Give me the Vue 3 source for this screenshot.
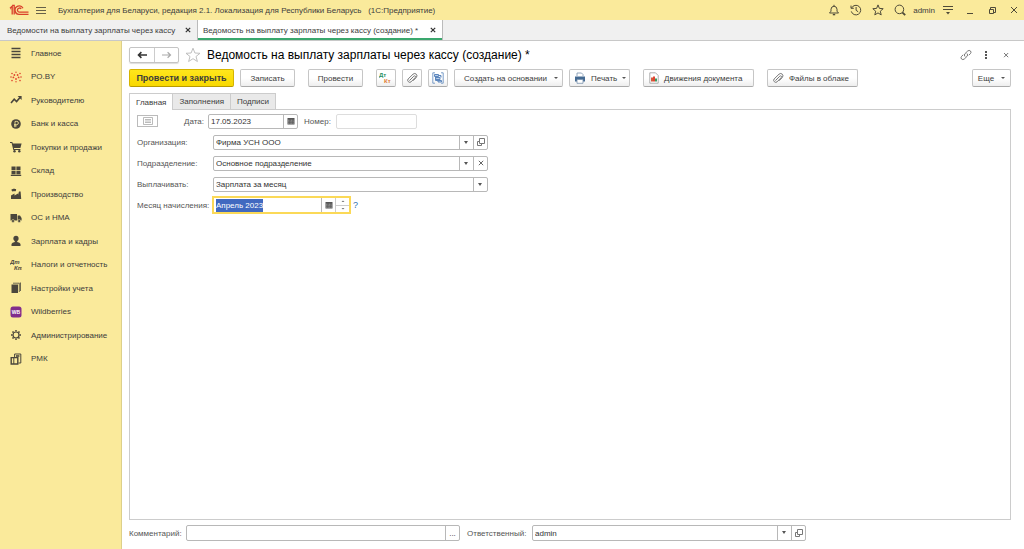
<script setup>
import { ref, onMounted } from 'vue'

const sections = [
  { id: 'main', label: 'Главное' },
  { id: 'poby', label: 'PO.BY' },
  { id: 'chart', label: 'Руководителю' },
  { id: 'bank', label: 'Банк и касса' },
  { id: 'cart', label: 'Покупки и продажи' },
  { id: 'store', label: 'Склад' },
  { id: 'factory', label: 'Производство' },
  { id: 'truck', label: 'ОС и НМА' },
  { id: 'person', label: 'Зарплата и кадры' },
  { id: 'dtkt', label: 'Налоги и отчетность' },
  { id: 'books', label: 'Настройки учета' },
  { id: 'wb', label: 'Wildberries' },
  { id: 'gear', label: 'Администрирование' },
  { id: 'rmk', label: 'РМК' },
]

const date = ref('17.05.2023')
const number = ref('')
const month = ref('Апрель 2023')
const comment = ref('')
const monthInput = ref(null)

onMounted(() => {
  monthInput.value.focus()
  monthInput.value.select()
})
</script>

<template>
  <div class="app">
    <header class="titlebar">
      <svg class="logo" viewBox="0 0 20 12" aria-label="1C" role="img">
        <g fill="none" stroke="#d9402b" stroke-width="1.3">
          <path d="M1 4.2 3.2 2.2V10.5M1.6 4.8H2.2" />
          <path d="M3.2 1.4H5.2V10.5" />
          <path d="M14 4.2A4.2 4.2 0 1 0 10.6 10.3H19.5" />
          <path d="M12.2 4.8A2.1 2.1 0 1 0 10.8 8.2H19.5" />
        </g>
      </svg>
      <button class="bare burger" aria-label="Меню">
        <svg width="11" height="9" viewBox="0 0 11 9"><path d="M0 1.5H10M0 4.5H10M0 7.5H10" stroke="#666048" /></svg>
      </button>
      <span class="app-name">Бухгалтерия для Беларуси, редакция 2.1. Локализация для Республики Беларусь &nbsp; (1С:Предприятие)</span>
      <div class="tools">
        <button class="bare" aria-label="Уведомления">
          <svg width="12" height="12" viewBox="0 0 12 12" fill="none" stroke="#4e4a38"><path d="M1.5 9H10.5L9 7.2V5.2Q8.8 2.4 6 2.2Q3.2 2.4 3 5.2V7.2ZM6 2.2V.8" /><path d="M4.8 10.6H7.2" stroke-width="1.4" /></svg>
        </button>
        <button class="bare" aria-label="История">
          <svg width="12" height="12" viewBox="0 0 12 12" fill="none" stroke="#4e4a38"><path d="M1.6 4A4.8 4.8 0 1 1 1.3 7.4M1 1.6V4.3H3.8M6.1 3V6.3L8.2 7.8" /></svg>
        </button>
        <button class="bare" aria-label="Избранное">
          <svg width="12" height="12" viewBox="0 0 12 12" fill="none" stroke="#4e4a38"><path d="M6 .9 7.4 4.4 11.2 4.7 8.3 7.2 9.2 10.9 6 8.9 2.8 10.9 3.7 7.2.8 4.7 4.6 4.4Z" /></svg>
        </button>
        <button class="bare" aria-label="Поиск">
          <svg width="12" height="12" viewBox="0 0 12 12" fill="none" stroke="#4e4a38"><circle cx="5.4" cy="5.4" r="4.3" /><path d="M8.3 8.3 11.2 11.2" stroke-width="1.8" /></svg>
        </button>
        <a class="user" href="#">admin</a>
        <button class="bare" aria-label="Сервис">
          <svg width="12" height="12" viewBox="0 0 12 12"><path d="M1 2.5H11M1 5.5H11" stroke="#4e4a38" /><path d="M4 8H8L6 10.4Z" fill="#4e4a38" /></svg>
        </button>
        <button class="bare win" aria-label="Свернуть">
          <svg width="8" height="8" viewBox="0 0 8 8"><path d="M1 7.5H7" stroke="#4e4a38" /></svg>
        </button>
        <button class="bare win" aria-label="Восстановить">
          <svg width="8" height="8" viewBox="0 0 8 8" fill="none" stroke="#4e4a38"><path d="M1.5 3.5H5.5V7.5H1.5ZM2.5 3V1.5H7.5V6.5H6" /></svg>
        </button>
        <button class="bare win" aria-label="Закрыть">
          <svg width="8" height="8" viewBox="0 0 8 8"><path d="M1 1 7 7M7 1 1 7" stroke="#4e4a38" /></svg>
        </button>
      </div>
    </header>

    <nav class="windows" aria-label="Открытые окна">
      <div class="window">
        <a href="#">Ведомости на выплату зарплаты через кассу</a>
        <button class="bare" aria-label="Закрыть вкладку"><svg width="6" height="6" viewBox="0 0 6 6"><path d="M.8.8 5.2 5.2M5.2.8.8 5.2" stroke="#333" stroke-width="1.2" /></svg></button>
      </div>
      <div class="window current">
        <a href="#">Ведомость на выплату зарплаты через кассу (создание) *</a>
        <button class="bare" aria-label="Закрыть вкладку"><svg width="6" height="6" viewBox="0 0 6 6"><path d="M.8.8 5.2 5.2M5.2.8.8 5.2" stroke="#333" stroke-width="1.2" /></svg></button>
      </div>
    </nav>

    <div class="body">
      <nav class="sidebar" aria-label="Разделы">
        <a v-for="s in sections" :key="s.id" href="#" class="section">
          <svg width="12" height="12" viewBox="0 0 12 12" aria-hidden="true">
            <path v-if="s.id === 'main'" d="M1.5 1.5H10.5M1.5 4.5H10.5M1.5 7.5H10.5M1.5 10.5H10.5" stroke="#4a463c" stroke-width="1.3" />
            <g v-else-if="s.id === 'poby'" fill="#e0452f">
              <circle cx="6" cy="1.3" r=".7" /><circle cx="2" cy="2.5" r=".8" /><circle cx="10" cy="2.5" r=".8" />
              <circle cx="4.4" cy="4" r=".9" /><circle cx="7.6" cy="4" r=".9" /><circle cx="1" cy="6" r=".8" />
              <circle cx="3.4" cy="6.4" r=".9" /><circle cx="8.6" cy="6.4" r=".9" /><circle cx="11" cy="6" r=".8" />
              <circle cx="6" cy="8" r=".9" /><circle cx="2" cy="9.6" r=".8" /><circle cx="10" cy="9.6" r=".8" /><circle cx="6" cy="10.8" r=".7" />
            </g>
            <g v-else-if="s.id === 'chart'"><path d="M1 9 4.2 5.2 6.6 7.6 10 3.6" fill="none" stroke="#4a463c" stroke-width="1.6" /><path d="M7.6 2H11.6V6Z" fill="#4a463c" /></g>
            <g v-else-if="s.id === 'bank'"><circle cx="6" cy="6" r="4.8" fill="#4a463c" /><path d="M5 9.2V3.4H6.8A1.6 1.6 0 0 1 6.8 6.6H4M4 7.9H6.8" fill="none" stroke="#faec9e" stroke-width=".8" /></g>
            <g v-else-if="s.id === 'cart'" fill="#4a463c"><path d="M0 1H2.3L2.8 2.4H11.6L10.4 7H3.9L4.2 8H10.4V9H3.3L1.6 2H0Z" /><circle cx="4.5" cy="10.3" r="1.2" /><circle cx="9.3" cy="10.3" r="1.2" /></g>
            <path v-else-if="s.id === 'store'" d="M1.5 1.5H5.6V5H1.5ZM6.4 1.5H10.5V5H6.4ZM1.5 5.8H5.6V9.2H1.5ZM6.4 5.8H10.5V9.2H6.4ZM.8 9.8H11.2V11H.8Z" fill="#4a463c" />
            <path v-else-if="s.id === 'factory'" d="M1 11V7.5L4.5 5.5V7.5L8 5.5V7L9 3.6H10.6L11.2 11ZM1.5 2.2Q1.5.6 3 1.3Q3.8 0 5 1.1Q6.6.6 6 2.4Q5.4 3.8 4 3.1Q2.4 4.2 1.5 2.2Z" fill="#4a463c" />
            <g v-else-if="s.id === 'truck'" fill="#4a463c"><path d="M.5 2H7V8.6H.5ZM7.6 3.6H10L11.6 6V8.6H7.6Z" /><circle cx="3" cy="9" r="1.5" stroke="#faec9e" stroke-width=".5" /><circle cx="9.2" cy="9" r="1.5" stroke="#faec9e" stroke-width=".5" /></g>
            <g v-else-if="s.id === 'person'" fill="#4a463c"><circle cx="6" cy="3.4" r="2.6" /><path d="M1.5 11V9Q2 7.6 4.8 7V5.5H7.2V7Q10 7.6 10.5 9V11Z" /></g>
            <g v-else-if="s.id === 'dtkt'" class="dtkt-glyph"><text x="0" y="5">Дт</text><text x="4" y="11">Кт</text></g>
            <g v-else-if="s.id === 'books'"><path d="M1.5 2.5H8V11H1.5Z" fill="#4a463c" /><path d="M3 1.2H9.3V10M9.9.8H10.5V9" fill="none" stroke="#4a463c" stroke-width=".8" /></g>
            <g v-else-if="s.id === 'wb'"><rect x=".5" y=".5" width="11" height="11" rx="2.5" fill="#812d8c" /><text x="6" y="8" class="wb-glyph">WB</text></g>
            <g v-else-if="s.id === 'gear'" fill="none" stroke="#4a463c"><circle cx="6" cy="6" r="3" stroke-width="1.2" /><path d="M6 1V2.6M6 9.4V11M1 6H2.6M9.4 6H11M2.5 2.5 3.6 3.6M8.4 8.4 9.5 9.5M9.5 2.5 8.4 3.6M3.6 8.4 2.5 9.5" stroke-width="1.5" /></g>
            <g v-else fill="none" stroke="#4a463c"><path d="M4.6 4V1H10.8V10H8.5" /><path d="M6 3H9.4" stroke-width="1.6" /><path d="M1.2 4.6H7.8V11H1.2Z" stroke-width="1.4" /><path d="M3.8 5V11" /></g>
          </svg>
          <span>{{ s.label }}</span>
        </a>
      </nav>

      <main class="document">
        <div class="heading">
          <div class="history">
            <button aria-label="Назад"><svg width="11" height="8" viewBox="0 0 11 8"><path d="M1.5 4H10M4.4 1.2 1.5 4 4.4 6.8" fill="none" stroke="#333" stroke-width="1.6" /></svg></button>
            <button aria-label="Вперед"><svg width="11" height="8" viewBox="0 0 11 8"><path d="M1 4H9.5M6.6 1.2 9.5 4 6.6 6.8" fill="none" stroke="#aaa" stroke-width="1.2" /></svg></button>
          </div>
          <button class="bare" aria-label="В избранное">
            <svg width="16" height="16" viewBox="0 0 16 16"><path d="M8 1.2 9.9 6 15 6.3 11 9.5 12.4 14.5 8 11.7 3.6 14.5 5 9.5 1 6.3 6.1 6Z" fill="none" stroke="#b8b8b8" stroke-width=".9" /></svg>
          </button>
          <h1>Ведомость на выплату зарплаты через кассу (создание) *</h1>
          <div class="heading-tools">
            <button class="bare" aria-label="Получить ссылку">
              <svg width="12" height="12" viewBox="0 0 12 12" fill="none" stroke="#777"><path d="M5 7.5Q3.7 6 5 4.6L7.7 2Q9.2.8 10.5 2Q11.6 3.3 10.4 4.7L8.8 6.2M7 4.5Q8.3 6 7 7.4L4.3 10Q2.8 11.2 1.5 10Q.4 8.7 1.6 7.3L3.2 5.8" /></svg>
            </button>
            <button class="bare" aria-label="Ещё действия">
              <svg width="12" height="12" viewBox="0 0 12 12" fill="#555"><path d="M5 2H7V4H5ZM5 5H7V7H5ZM5 8H7V10H5Z" /></svg>
            </button>
            <button class="bare" aria-label="Закрыть документ">
              <svg width="12" height="12" viewBox="0 0 12 12"><path d="M4 4 8.2 8.2M8.2 4 4 8.2" stroke="#777" /></svg>
            </button>
          </div>
        </div>

        <div class="toolbar">
          <div class="group">
            <button class="cmd primary">Провести и закрыть</button>
            <button class="cmd mid">Записать</button>
          </div>
          <button class="cmd mid">Провести</button>
          <div class="group">
            <button class="cmd icon" aria-label="Дт Кт">
              <svg width="14" height="12" viewBox="0 0 14 12" class="dtkt-color"><text x="0" y="5" fill="#2a8f63">Дт</text><text x="5" y="11" fill="#e07b35">Кт</text></svg>
            </button>
            <button class="cmd icon" aria-label="Присоединенные файлы">
              <svg width="12" height="12" viewBox="0 0 12 12"><path d="M3.4 8.6 7.8 4.2Q8.7 3.5 9.3 4.1T9.2 5.6L5 9.9Q3.6 11 2.3 9.7T2.1 7L7 2.2Q8.8.7 10.3 2.2T10.2 5.6L7 8.8" fill="none" stroke="#777" /></svg>
            </button>
            <button class="cmd icon" aria-label="Структура подчиненности">
              <svg width="12" height="12" viewBox="0 0 12 12" fill="none" stroke="#5c86bd"><path d="M3 .8H.8V11.2H3M9 .8H11.2V11.2H9" stroke-width=".8" /><path d="M2.5 2.5H6.5V4.5H2.5ZM4 5.5H8V7.5H4ZM6 8.5H9.5V10H6ZM6.5 3.5H9V5.5M3.5 4.5V8.5H6" fill="#b9cfea" /></svg>
            </button>
            <button class="cmd create">Создать на основании<i class="caret"></i></button>
            <button class="cmd print">
              <svg width="12" height="12" viewBox="0 0 12 12"><path d="M3 4V1H7.5L9 2.5V4" fill="#fff" stroke="#7790ac" stroke-width=".8" /><path d="M1 4.5H11V9.5H1Z" fill="#446a92" /><path d="M3 7.5H9V11.3H3Z" fill="#fff" stroke="#7790ac" stroke-width=".8" /></svg>
              Печать<i class="caret"></i>
            </button>
          </div>
          <button class="cmd moves">
            <svg width="10" height="12" viewBox="0 0 10 12"><path d="M.8.8H6.5L9.2 3.5V11.2H.8Z" fill="#fff" stroke="#999" stroke-width=".8" /><path d="M2 5.5H4V9.5H2Z" fill="#d5573b" /><path d="M4 4.5H6V9.5H4Z" fill="#e0452f" /><path d="M6 6.5H8V9.5H6Z" fill="#3c9a62" /></svg>
            Движения документа
          </button>
          <button class="cmd files">
            <svg width="12" height="12" viewBox="0 0 12 12"><path d="M3.4 8.6 7.8 4.2Q8.7 3.5 9.3 4.1T9.2 5.6L5 9.9Q3.6 11 2.3 9.7T2.1 7L7 2.2Q8.8.7 10.3 2.2T10.2 5.6L7 8.8" fill="none" stroke="#777" /></svg>
            Файлы в облаке
          </button>
          <button class="cmd more">Еще<i class="caret"></i></button>
        </div>

        <div class="tabs" role="tablist">
          <button role="tab" aria-selected="true">Главная</button>
          <button role="tab" aria-selected="false">Заполнения</button>
          <button role="tab" aria-selected="false">Подписи</button>
        </div>

        <section class="panel">
          <div class="row">
            <button class="status" aria-label="Состояние">
              <svg width="10" height="8" viewBox="0 0 10 8" fill="none" stroke="#aaa"><path d="M.5.5H9.5V7.5H.5ZM2 2.5H8M2 4H8M2 5.5H8" stroke-width=".8" /></svg>
            </button>
            <label for="date" class="date-label">Дата:</label>
            <div class="field date">
              <input id="date" v-model="date" type="text" />
              <button aria-label="Выбрать дату"><svg width="8" height="8" viewBox="0 0 8 8"><path d="M.5 1H7.5V7.5H.5Z" fill="#555" /><path d="M1 3.2H7M1.2 4.8H6.8M1.2 6.3H6.8" stroke="#ccc" stroke-width=".6" stroke-dasharray="1 .5" /></svg></button>
            </div>
            <label for="number" class="number-label">Номер:</label>
            <div class="field number"><input id="number" v-model="number" type="text" /></div>
          </div>

          <div class="row">
            <label for="org" class="caption">Организация:</label>
            <div class="field wide">
              <div class="choice"><select id="org"><option>Фирма УСН ООО</option></select><i class="caret"></i></div>
              <button aria-label="Открыть организацию"><svg width="8" height="8" viewBox="0 0 8 8" fill="none" stroke="#777"><path d="M2.5.5H7.5V5.5H2.5ZM2 3.5H.5V7.5H4.5V6" /></svg></button>
            </div>
          </div>
          <div class="row">
            <label for="dept" class="caption">Подразделение:</label>
            <div class="field wide">
              <div class="choice"><select id="dept"><option>Основное подразделение</option></select><i class="caret"></i></div>
              <button aria-label="Очистить"><svg width="6" height="6" viewBox="0 0 6 6"><path d="M.8.8 5.2 5.2M5.2.8.8 5.2" stroke="#666" /></svg></button>
            </div>
          </div>
          <div class="row">
            <label for="pay" class="caption">Выплачивать:</label>
            <div class="field wide">
              <div class="choice"><select id="pay"><option>Зарплата за месяц</option></select><i class="caret"></i></div>
            </div>
          </div>
          <div class="row">
            <label for="month" class="caption month-label">Месяц начисления:</label>
            <div class="field month">
              <input id="month" ref="monthInput" v-model="month" type="text" />
              <button aria-label="Выбрать месяц"><svg width="8" height="8" viewBox="0 0 8 8"><path d="M.5 1H7.5V7.5H.5Z" fill="#555" /><path d="M1 3.2H7M1.2 4.8H6.8M1.2 6.3H6.8" stroke="#ccc" stroke-width=".6" stroke-dasharray="1 .5" /></svg></button>
              <div class="spin">
                <button aria-label="Больше"><svg width="4" height="2" viewBox="0 0 4 2"><path d="M.5 2 2 .4 3.5 2Z" fill="#777" /></svg></button>
                <button aria-label="Меньше"><svg width="4" height="2" viewBox="0 0 4 2"><path d="M.5 0 2 1.6 3.5 0Z" fill="#777" /></svg></button>
              </div>
            </div>
            <a href="#" class="help">?</a>
          </div>
        </section>

        <footer class="footer">
          <label for="comment" class="comment-label">Комментарий:</label>
          <div class="field"><input id="comment" v-model="comment" type="text" /><button aria-label="Редактировать комментарий">...</button></div>
          <label for="owner" class="owner-label">Ответственный:</label>
          <div class="field">
            <div class="choice"><select id="owner"><option>admin</option></select><i class="caret"></i></div>
            <button aria-label="Открыть ответственного"><svg width="8" height="8" viewBox="0 0 8 8" fill="none" stroke="#777"><path d="M2.5.5H7.5V5.5H2.5ZM2 3.5H.5V7.5H4.5V6" /></svg></button>
          </div>
        </footer>
      </main>
    </div>
  </div>
</template>

<style>
body { margin: 0; background: #fff; }
</style>

<style scoped>
* { box-sizing: border-box; }
.app {
  display: flex;
  flex-direction: column;
  min-height: 100vh;
  font: 8px/13px "Liberation Sans", Arial, sans-serif;
  color: #3c3c3c;
}
button, input, select { font: inherit; color: inherit; margin: 0; padding: 0; border: 0; border-radius: 0; background: none; }
a { color: inherit; text-decoration: none; }
svg { display: block; flex: none; }
button { display: flex; align-items: center; justify-content: center; }

.titlebar { display: flex; align-items: center; height: 20px; padding: 0 4px 0 9px; background: #faea9b; }
.logo { width: 20px; height: 12px; }
.burger { margin: 0 11px 0 7px; }
.app-name { flex: 1; white-space: nowrap; overflow: hidden; }
.tools { display: flex; align-items: center; gap: 10px; }
.user { margin: 0 -3px; }
.win { width: 12px; }

.windows { display: flex; height: 21px; background: #f0f0f0; border-bottom: 1px solid #c8c8c8; }
.window { display: flex; align-items: center; justify-content: space-between; width: 198px; padding: 0 6px 0 7px; border-right: 1px solid #bbb; white-space: nowrap; }
.window.current { width: 245px; padding-left: 5px; background: #fff; box-shadow: inset 0 -2px #3aa76d; }

.body { display: flex; flex: 1; }
.sidebar { width: 122px; flex: none; border-right: 1px solid #ddd08a; background: #faea9b; }
.section { display: flex; align-items: center; gap: 9px; height: 24px; padding-left: 10px; white-space: nowrap; }
.section:nth-child(even) { height: 23px; }
.dtkt-glyph { font: italic bold 6px "Liberation Sans", sans-serif; fill: #4a463c; }
.wb-glyph { font: bold 5px "Liberation Sans", sans-serif; fill: #fff; text-anchor: middle; }
.dtkt-color { font: bold 6px "Liberation Sans", sans-serif; }

.document { display: flex; flex: 1; flex-direction: column; min-width: 0; padding: 6px 13px 8px 7px; }
.heading { display: flex; align-items: center; height: 16px; gap: 6px; }
.history { display: flex; border: 1px solid #c4c4c4; border-radius: 2px; box-shadow: 0 1px 1px #ddd; }
.history button { width: 24px; height: 14px; }
.history button + button { border-left: 1px solid #ccc; }
h1 { flex: 1; margin: 0; font-size: 12px; line-height: 16px; font-weight: 400; color: #000; white-space: nowrap; }
.heading-tools { display: flex; gap: 8px; margin-right: -1px; }

.toolbar { display: flex; gap: 13px; margin-top: 6px; }
.group { display: flex; gap: 6px; }
.cmd { height: 18px; gap: 5px; border: 1px solid #c6c6c6; border-bottom-color: #aaa; border-radius: 2px; background: linear-gradient(#fff 50%, #eee); white-space: nowrap; }
.primary { width: 105px; border-color: #d5b400; border-bottom-color: #b89a00; background: linear-gradient(#ffe61c, #f8d800); font-size: 9px; font-weight: 700; }
.mid { width: 55px; }
.icon { width: 20px; }
.create, .print, .moves, .files { justify-content: flex-start; padding: 0 4px; }
.create { width: 109px; padding-left: 9px; }
.print { width: 61px; }
.create .caret, .print .caret { margin-left: auto; }
.moves { width: 111px; padding-left: 5px; }
.files { width: 91px; }
.more { width: 39px; margin-left: auto; gap: 7px; }
.caret { width: 0; height: 0; border: 2px solid transparent; border-top-color: #555; border-bottom-width: 0; }

.tabs { display: flex; margin-top: 6px; position: relative; }
.tabs button { height: 16px; padding: 0 6px; border: 1px solid #ccc; border-left-width: 0; border-bottom: 0; background: #e9e9e9; }
.tabs button:first-child { height: 17px; margin-bottom: -1px; border-left-width: 1px; background: #fff; }

.panel { display: flex; flex: 1; flex-direction: column; gap: 5px; padding: 3px 7px; border: 1px solid #ccc; }
.row { display: flex; align-items: center; height: 16px; }
.caption { width: 76px; white-space: nowrap; }
.month-label { width: 75px; }
label { color: #555; }
.status { width: 21px; height: 12px; border: 1px solid #bbb; }
.date-label { margin-left: 26px; width: 24px; }
.number-label { margin-left: 6px; width: 32px; }

.field { display: flex; height: 15px; border: 1px solid #b8b8b8; border-radius: 2px; background: #fff; color: #333; }
.field input, .choice select { flex: 1; min-width: 0; padding: 0 2px; outline: 0; }
.field button { width: 14px; border-left: 1px solid #b8b8b8; }
.field.date { width: 90px; }
.field.number { width: 81px; border-color: #ddd; }
.field.wide { width: 275px; }
.choice { position: relative; display: flex; flex: 1; min-width: 0; }
.choice select { appearance: none; padding-right: 16px; }
.choice .caret { position: absolute; right: 0; top: 0; bottom: 0; width: 14px; height: auto; border: 0; border-left: 1px solid #b8b8b8; pointer-events: none; }
.choice .caret::after { content: ""; position: absolute; left: 4px; top: 5px; border: 3px solid transparent; border-width: 3px 2px 0; border-top-color: #555; }
.field.month { width: 139px; height: 18px; border: 2px solid #fbd957; border-radius: 0; }
.field.month input::selection { background: #4169c0; color: #fff; }
.spin { display: flex; flex-direction: column; width: 14px; border-left: 1px solid #ccc; }
.field .spin button { flex: 1; width: auto; border: 0; }
.field .spin button + button { border-top: 1px solid #ccc; }
.help { margin-left: 2px; font-size: 9px; color: #2f6fb0; }

.footer { display: flex; align-items: center; margin-top: 5px; padding-right: 205px; }
.footer .field { flex: 1; height: 16px; }
.comment-label { width: 57px; }
.owner-label { width: 65px; margin-left: 7px; }
</style>
